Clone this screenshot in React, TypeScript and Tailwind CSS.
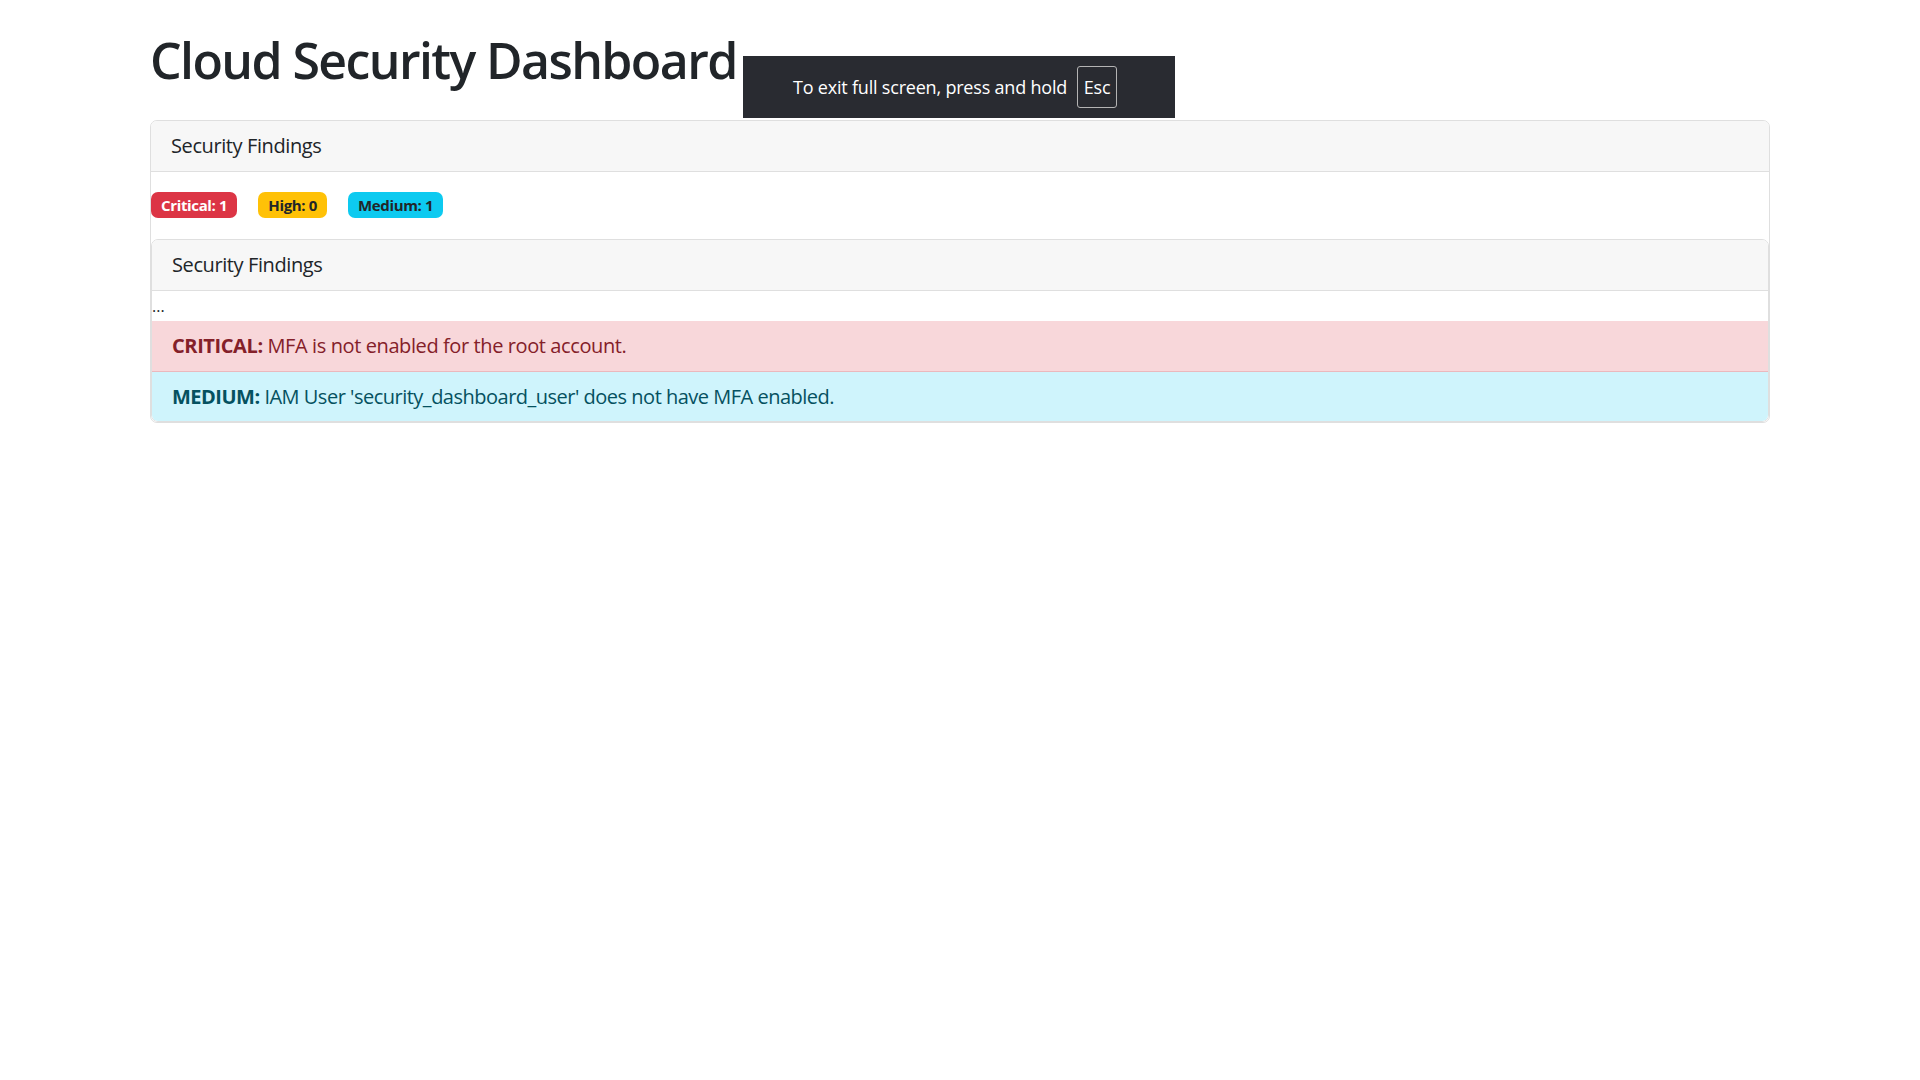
import React from 'react';

const findings = [
  { level: 'CRITICAL', text: 'MFA is not enabled for the root account.', tone: 'danger' },
  { level: 'MEDIUM', text: "IAM User 'security_dashboard_user' does not have MFA enabled.", tone: 'info' },
];

function FullscreenNotice() {
  return (
    <div className="absolute left-[743px] top-[56px] flex h-[62px] w-[432px] items-center bg-[#292b31] pl-[50px] text-[18px] tracking-[-0.2px] text-white">
      <span>To exit full screen, press and hold</span>
      <span className="ml-[10px] flex h-[42px] w-[40px] items-center justify-center rounded-[3px] border border-[#b4b4b4]">
        Esc
      </span>
    </div>
  );
}

export default function App() {
  return (
    <div className="relative min-h-screen bg-white font-['Segoe_UI','Open_Sans',sans-serif] text-[#212529]">
      <div className="mx-auto w-[1650px] px-[15px] pt-[30px]">
        <h1 className="mb-[30px] text-[50px] font-semibold leading-[60px] tracking-[-1.6px]">Cloud Security Dashboard</h1>

        <div className="overflow-hidden rounded-[7px] border border-[#dfdfdf]">
          <div className="border-b border-[#dfdfdf] bg-[#f7f7f7] px-[20px] py-[10px] text-[20px] leading-[30px] tracking-[-0.4px]">
            Security Findings
          </div>

          <div className="flex gap-[21px] pb-[21px] pt-[20px]">
            <span className="rounded-[7px] bg-[#dc3545] px-[10px] py-[5px] text-[15px] font-bold leading-[16px] tracking-[-0.35px] text-white">
              Critical: 1
            </span>
            <span className="rounded-[7px] bg-[#ffc107] px-[10px] py-[5px] text-[15px] font-bold leading-[16px] tracking-[-0.35px] text-[#212529]">
              High: 0
            </span>
            <span className="rounded-[7px] bg-[#0dcaf0] px-[10px] py-[5px] text-[15px] font-bold leading-[16px] tracking-[-0.35px] text-[#212529]">
              Medium: 1
            </span>
          </div>

          <div className="overflow-hidden rounded-[7px] border border-[#dfdfdf]">
            <div className="border-b border-[#dfdfdf] bg-[#f7f7f7] px-[20px] py-[10px] text-[20px] leading-[30px] tracking-[-0.4px]">
              Security Findings
            </div>
            <div className="text-[16px] leading-[30px]">...</div>
            {findings.map((f, i) => (
              <div
                key={i}
                className={
                  f.tone === 'danger'
                    ? 'border-b border-[#eab8bd] bg-[#f8d7da] px-[20px] py-[10px] text-[20px] leading-[30px] tracking-[-0.4px] text-[#842029]'
                    : 'bg-[#cff4fc] px-[20px] py-[10px] text-[20px] leading-[29px] tracking-[-0.5px] text-[#055160]'
                }
              >
                <strong className="font-bold">{f.level}:</strong> {f.text}
              </div>
            ))}
          </div>
        </div>
      </div>

      <FullscreenNotice />
    </div>
  );
}
